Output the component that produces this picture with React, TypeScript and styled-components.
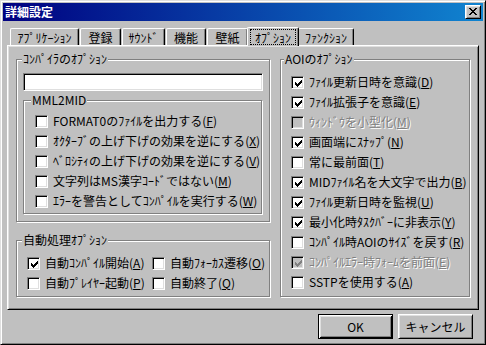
import React from "react";
import styled, { createGlobalStyle } from "styled-components";

const face = `"Noto Sans CJK JP", "Noto Sans", sans-serif`;

const GlobalStyle = createGlobalStyle`
  html, body { margin: 0; padding: 0; background: #c0c0c0; }
  body { font-family: ${face}; font-size: 12px; color: #000; }
  * { box-sizing: border-box; }
`;

const Window = styled.div`
  width: 486px;
  height: 345px;
  background: #c0c0c0;
  border: 1px solid;
  border-color: #dfdfdf #000 #000 #dfdfdf;
  box-shadow: inset 1px 1px #fff, inset -1px -1px #808080;
  padding: 2px;
  display: flex;
  flex-direction: column;
`;

const TitleBar = styled.div`
  height: 18px;
  background: linear-gradient(to right, #000080, #1084d0);
  display: flex;
  align-items: center;
  justify-content: space-between;
  padding: 0 2px;
`;

const Title = styled.span`
  color: #fff;
  font-weight: bold;
  line-height: 14px;
`;

const CloseButton = styled.div`
  width: 16px;
  height: 14px;
  background: #c0c0c0;
  border: 1px solid;
  border-color: #fff #000 #000 #fff;
  box-shadow: inset 1px 1px #dfdfdf, inset -1px -1px #808080;
  display: flex;
  padding: 2px 0 0 3px;
`;

const Body = styled.div`
  display: flex;
  flex-direction: column;
  padding: 4px 4px 0;
`;

const TabRow = styled.div`
  position: relative;
  z-index: 1;
  height: 20px;
  display: flex;
  align-items: flex-end;
  gap: 1px;
  padding-left: 3px;
`;

const Tab = styled.div<{ $active?: boolean; $w: number }>`
  width: ${(p) => p.$w}px;
  height: ${(p) => (p.$active ? 19 : 17)}px;
  margin: 0 ${(p) => (p.$active ? -2 : 0)}px ${(p) => (p.$active ? -1 : 0)}px;
  display: flex;
  align-items: center;
  justify-content: center;
  background: #c0c0c0;
  border-left: 1px solid #fff;
  border-top: 1px solid #fff;
  border-right: 1px solid #000;
  border-top-left-radius: 2px;
  border-top-right-radius: 2px;
  box-shadow: inset -1px 0 #808080;
  position: relative;
  z-index: ${(p) => (p.$active ? 2 : 0)};
  line-height: 13px;
  white-space: nowrap;
`;

const FocusLabel = styled.span`
  outline: 1px dotted #000;
  padding: 1px 4px 0;
  line-height: 13px;
`;

const Panel = styled.div`
  width: 472px;
  height: 265px;
  border: 1px solid;
  border-color: #fff #000 #000 #fff;
  box-shadow: inset 1px 1px #dfdfdf, inset -1px -1px #808080;
  display: flex;
  gap: 9px;
  padding: 13px 7px 0 8px;
`;

const Column = styled.div<{ $w: number }>`
  width: ${(p) => p.$w}px;
  display: flex;
  flex-direction: column;
  gap: 17px;
`;

const Group = styled.div<{ $h: number; $pt?: number; $pl?: number }>`
  position: relative;
  height: ${(p) => p.$h - 1}px;
  margin: 0 1px 1px 0;
  border: 1px solid #808080;
  box-shadow: inset 1px 1px #fff, 1px 1px #fff;
  padding: ${(p) => p.$pt ?? 0}px 6px 0 ${(p) => p.$pl ?? 6}px;
  display: flex;
  flex-direction: column;
`;

const Legend = styled.span<{ $left?: number }>`
  position: absolute;
  top: -8px;
  left: ${(p) => p.$left ?? 5}px;
  padding: 0 1px;
  background: #c0c0c0;
  line-height: 14px;
  white-space: nowrap;
`;

const TextBox = styled.div`
  height: 18px;
  background: #fff;
  border: 1px solid;
  border-color: #808080 #fff #fff #808080;
  box-shadow: inset 1px 1px #000, inset -1px -1px #dfdfdf;
  margin-bottom: 9px;
`;

const Row = styled.div`
  height: 20px;
  display: flex;
  align-items: center;
  gap: 5px;
  white-space: nowrap;
`;

const Pair = styled.div`
  display: grid;
  grid-template-columns: 125px auto;
`;

const Box = styled.span<{ $disabled?: boolean }>`
  width: 13px;
  height: 13px;
  flex: none;
  background: ${(p) => (p.$disabled ? "#c0c0c0" : "#fff")};
  border: 1px solid;
  border-color: #808080 #fff #fff #808080;
  box-shadow: inset 1px 1px #000, inset -1px -1px #dfdfdf;
  display: flex;
  padding: 2px 0 0 2px;
`;

const Label = styled.span<{ $disabled?: boolean }>`
  line-height: 14px;
  color: ${(p) => (p.$disabled ? "#808080" : "#000")};
  text-shadow: ${(p) => (p.$disabled ? "1px 1px #fff" : "none")};
  u {
    text-underline-offset: 1px;
  }
`;

const ButtonRow = styled.div`
  display: flex;
  justify-content: flex-end;
  gap: 5px;
  margin-top: 4px;
  padding-right: 6px;
`;

const Button = styled.div<{ $default?: boolean }>`
  width: 75px;
  height: 25px;
  display: flex;
  align-items: center;
  justify-content: center;
  line-height: 14px;
  border: 1px solid;
  border-color: ${(p) => (p.$default ? "#000" : "#fff #000 #000 #fff")};
  box-shadow: ${(p) =>
    p.$default
      ? "inset 1px 1px #fff, inset -1px -1px #000, inset 2px 2px #dfdfdf, inset -2px -2px #808080"
      : "inset 1px 1px #dfdfdf, inset -1px -1px #808080"};
`;

const pixelPath = (rows: string[]) =>
  rows
    .flatMap((r, y) => [...r].map((c, x) => (c === "#" ? `M${x} ${y}h1v1h-1z` : "")))
    .join("");

const CHECK = pixelPath([
  "......#",
  ".....##",
  "#...###",
  "##.###.",
  "#####..",
  ".###...",
  "..#....",
]);

const CROSS = pixelPath([
  "##....##",
  ".##..##.",
  "..####..",
  "...##...",
  "..####..",
  ".##..##.",
  "##....##",
]);

type Opt = [string, string, boolean, boolean?];

function Check({ text, hot, on, disabled }: { text: string; hot: string; on: boolean; disabled?: boolean }) {
  return (
    <Row>
      <Box $disabled={disabled}>
        {on && (
          <svg width="9" height="9" viewBox="-1 -1 9 9" shapeRendering="crispEdges">
            <path d={CHECK} fill={disabled ? "#808080" : "#000"} />
          </svg>
        )}
      </Box>
      <Label $disabled={disabled}>
        {text}(<u>{hot}</u>)
      </Label>
    </Row>
  );
}

const mml: Opt[] = [
  ["FORMAT0のﾌｧｲﾙを出力する", "F", false],
  ["ｵｸﾀｰﾌﾞの上げ下げの効果を逆にする", "X", false],
  ["ﾍﾞﾛｼﾃｨの上げ下げの効果を逆にする", "V", false],
  ["文字列はMS漢字ｺｰﾄﾞではない", "M", false],
  ["ｴﾗｰを警告としてｺﾝﾊﾟｲﾙを実行する", "W", false],
];

const auto: Opt[] = [
  ["自動ｺﾝﾊﾟｲﾙ開始", "A", true],
  ["自動ﾌｫｰｶｽ遷移", "O", false],
  ["自動ﾌﾟﾚｲﾔｰ起動", "P", false],
  ["自動終了", "Q", false],
];

const aoi: Opt[] = [
  ["ﾌｧｲﾙ更新日時を意識", "D", true],
  ["ﾌｧｲﾙ拡張子を意識", "E", true],
  ["ｳｨﾝﾄﾞｳを小型化", "M", false, true],
  ["画面端にｽﾅｯﾌﾟ", "N", true],
  ["常に最前面", "T", false],
  ["MIDﾌｧｲﾙ名を大文字で出力", "B", true],
  ["ﾌｧｲﾙ更新日時を監視", "U", true],
  ["最小化時ﾀｽｸﾊﾞｰに非表示", "Y", true],
  ["ｺﾝﾊﾟｲﾙ時AOIのｻｲｽﾞを戻す", "R", false],
  ["ｺﾝﾊﾟｲﾙｴﾗｰ時ﾌｫｰﾑを前面", "E", true, true],
  ["SSTPを使用する", "A", false],
];

const tabs: [string, number][] = [
  ["ｱﾌﾟﾘｹｰｼｮﾝ", 69],
  ["登録", 41],
  ["ｻｳﾝﾄﾞ", 43],
  ["機能", 40],
  ["壁紙", 41],
  ["ｵﾌﾟｼｮﾝ", 52],
  ["ﾌｧﾝｸｼｮﾝ", 56],
];

export default function App() {
  return (
    <>
      <GlobalStyle />
      <Window>
        <TitleBar>
          <Title>詳細設定</Title>
          <CloseButton>
            <svg width="8" height="7" viewBox="0 0 8 7" shapeRendering="crispEdges">
              <path d={CROSS} fill="#000" />
            </svg>
          </CloseButton>
        </TitleBar>
        <Body>
          <TabRow>
            {tabs.map(([t, w]) =>
              t === "ｵﾌﾟｼｮﾝ" ? (
                <Tab key={t} $w={w} $active>
                  <FocusLabel>{t}</FocusLabel>
                </Tab>
              ) : (
                <Tab key={t} $w={w}>
                  {t}
                </Tab>
              )
            )}
          </TabRow>
          <Panel>
            <Column $w={255}>
              <Group $h={164} $pt={13}>
                <Legend>ｺﾝﾊﾟｲﾗのｵﾌﾟｼｮﾝ</Legend>
                <TextBox />
                <Group $h={115} $pt={10} $pl={11}>
                  <Legend $left={7}>MML2MID</Legend>
                  {mml.map(([t, h, on]) => (
                    <Check key={t} text={t} hot={h} on={on} />
                  ))}
                </Group>
              </Group>
              <Group $h={58} $pt={12} $pl={10}>
                <Legend>自動処理ｵﾌﾟｼｮﾝ</Legend>
                <Pair>
                  {auto.map(([t, h, on]) => (
                    <Check key={t} text={t} hot={h} on={on} />
                  ))}
                </Pair>
              </Group>
            </Column>
            <Column $w={191}>
              <Group $h={239} $pt={12} $pl={10}>
                <Legend $left={3}>AOIのｵﾌﾟｼｮﾝ</Legend>
                {aoi.map(([t, h, on, dis]) => (
                  <Check key={t + h} text={t} hot={h} on={on} disabled={dis} />
                ))}
              </Group>
            </Column>
          </Panel>
          <ButtonRow>
            <Button $default>OK</Button>
            <Button>キャンセル</Button>
          </ButtonRow>
        </Body>
      </Window>
    </>
  );
}
